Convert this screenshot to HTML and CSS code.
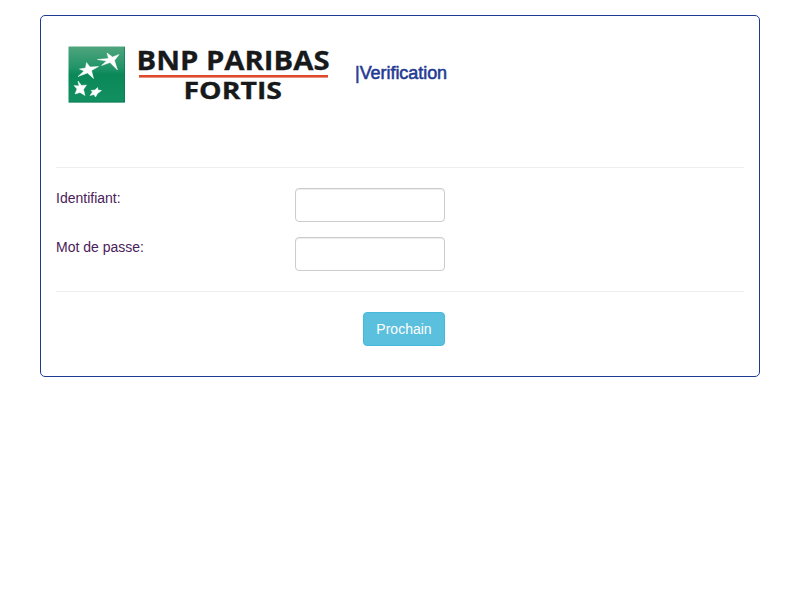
FILE: index.html
```html
<!DOCTYPE html>
<html lang="fr">
<head>
<meta charset="utf-8">
<title>Verification</title>
<link rel="stylesheet" href="styles.css">
</head>
<body>
<main class="panel">
  <header class="header">
    <svg class="logo" width="280" height="72" viewBox="60 38 280 72">
      <defs>
        <linearGradient id="green" x1="0" y1="0" x2="0" y2="1">
          <stop offset="0" stop-color="#4fa57d"/>
          <stop offset=".38" stop-color="#219468"/>
          <stop offset=".5" stop-color="#0a8858"/>
          <stop offset="1" stop-color="#129061"/>
        </linearGradient>
      </defs>
      <rect x="68.5" y="46.500" width="56.500" height="56" fill="url(#green)"/>
      <path d="M69 102H124.500V47" fill="none" stroke="#08734a" stroke-opacity=".6" stroke-width="1"/>
      <g fill="#fff" stroke="#fff" stroke-width=".5">
        <path d="M97.500 59.500L108.500 58.500L107 53L112.500 57L119 54.500L114.500 60.500L117.500 70L110 62.500L101.500 65.500L106.500 61Z"/>
        <path d="M79.500 69L85.500 68L86.500 62.500L90 67L98.500 66.500L91.500 70.500L93.500 78.500L87.500 73L78 76.500L84 71Z"/>
        <path d="M78 81L81.500 85.500L86.500 85L83.500 89.500L85 95.500L80 92.500L75 94L77 89L74 85.500L79 86Z"/>
        <path d="M97.500 87.500L98 90L101.500 90.500L97.500 93.500L95.500 97L94 94.500L90 95.500L92.500 92L91 90.500L95 90Z"/>
      </g>
      <g class="wordmark">
        <text x="136.500" y="69.800" textLength="193" lengthAdjust="spacingAndGlyphs" font-size="26">BNP PARIBAS</text>
        <text x="183.500" y="98.500" textLength="98.500" lengthAdjust="spacingAndGlyphs" font-size="22.500">FORTIS</text>
      </g>
      <rect x="139" y="75" width="189" height="2.600" fill="#dd4a2c"/>
    </svg>
    <h1 class="title">|Verification</h1>
  </header>
  <hr class="rule">
  <div class="row">
    <label class="label" for="ident">Identifiant:</label>
    <input class="field" id="ident" type="text" readonly>
  </div>
  <div class="row">
    <label class="label" for="pass">Mot de passe:</label>
    <input class="field" id="pass" type="text" readonly>
  </div>
  <hr class="rule rule-last">
  <div class="actions"><button class="button" type="button">Prochain</button></div>
</main>
</body>
</html>
```
FILE: styles.css
```css
* { box-sizing: border-box; }
body {
  margin: 0;
  background: #fff;
  font: 14px/20px "Liberation Sans", Arial, sans-serif;
}
.panel {
  width: 720px;
  height: 362px;
  margin: 15px auto 0;
  padding: 0 15px;
  border: 1px solid #1f3a93;
  border-radius: 5px;
}
.header {
  display: flex;
  height: 151px;
  padding: 22px 0 0 4px;
}
.logo { flex: none; }
.wordmark {
  fill: #17191b;
  stroke: #17191b;
  stroke-width: .3px;
  font-family: "Open Sans", sans-serif;
  font-weight: 700;
}
.title {
  margin: 25px 0 0 15px;
  color: #1f3a93;
  font-size: 18px;
  font-weight: 500;
  letter-spacing: -.05px;
  line-height: 20px;
  -webkit-text-stroke: .55px #1f3a93;
}
.rule {
  height: 1px;
  margin: 0 0 20px;
  border: 0;
  background: #eee;
}
.row {
  display: flex;
  height: 34px;
  margin-bottom: 15px;
}
.label {
  width: 239px;
  color: #4a2059;
}
.field {
  width: 150px;
  height: 34px;
  padding: 6px 12px;
  border: 1px solid #ccc;
  border-radius: 4px;
  background: #fff;
  box-shadow: inset 0 1px 1px rgba(0, 0, 0, .075);
  outline: 0;
}
.rule-last { margin-top: 20px; }
.actions {
  display: flex;
  justify-content: flex-end;
  width: 389px;
}
.button {
  width: 82px;
  height: 34px;
  padding: 0;
  border: 1px solid #46b8da;
  border-radius: 4px;
  background: #5bc0de;
  color: #fff;
  font: inherit;
}
```
